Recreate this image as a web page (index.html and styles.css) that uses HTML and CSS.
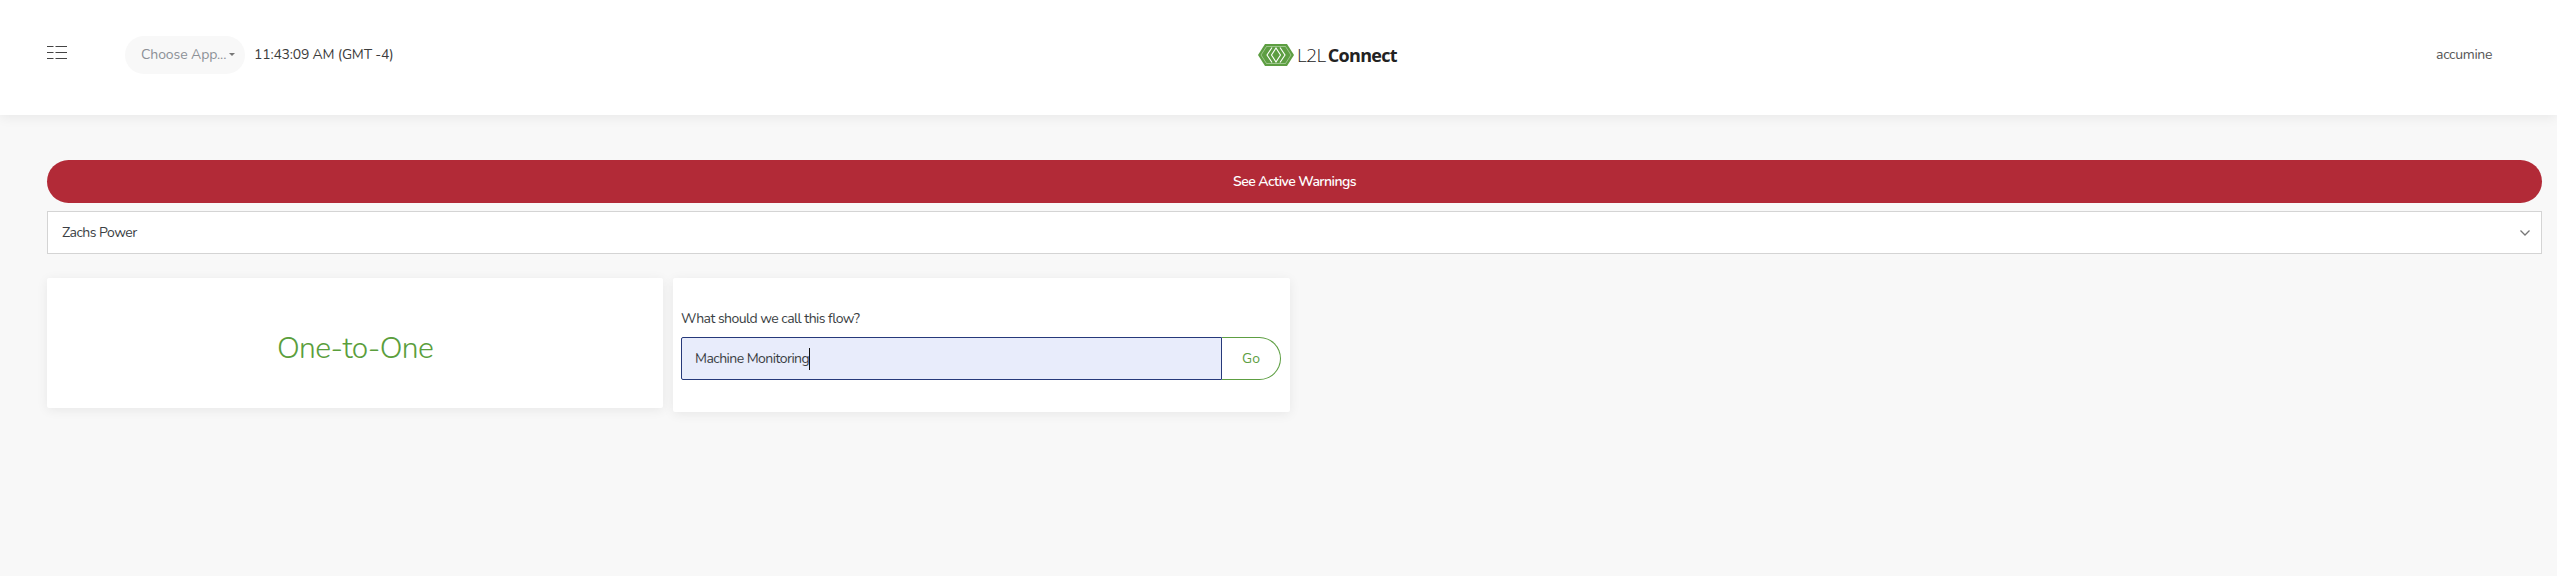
FILE: index.html
```html
<!DOCTYPE html>
<html lang="en">
<head>
<meta charset="utf-8">
<title>L2L Connect</title>
<link rel="stylesheet" href="styles.css">
</head>
<body>
<header class="topbar">
  <div class="topbar-left">
    <svg class="menu-icon" width="20" height="13" viewBox="0 0 20 13" fill="none" stroke="#444" stroke-width="1"><path d="M0 .5h6.500M8.500 .5h11.500M0 6.500h6.500M8.500 6.500h11.500M0 12.500h6.500M8.500 12.500h11.500"/></svg>
    <div class="app-chooser"><span>Choose App...</span><i class="caret"></i></div>
    <div class="clock">11:43:09 AM (GMT -4)</div>
  </div>
  <div class="logo">
    <svg width="36" height="22" viewBox="0 0 36 22"><path d="M7 0h22l7 11-7 11H7L0 11z" fill="#5d9e42"/><path d="M3 11l5.500-8.500h19L33 11l-5.500 8.500h-19z" fill="none" stroke="#fff" stroke-opacity=".5" stroke-width=".8"/><path d="M18 4l4.500 7-4.500 7-4.500-7z" fill="none" stroke="#fff" stroke-width="1.100"/><path d="M14 3.500l-5 7.500 5 7.500M22 3.500l5 7.500-5 7.500" fill="none" stroke="#fff" stroke-width="1.100"/></svg>
    <span class="logo-l2l">L2L</span><span class="logo-connect">Connect</span>
  </div>
  <div class="user">accumine</div>
</header>
<main class="content">
  <button class="warning-btn">See Active Warnings</button>
  <div class="select-box">
    <span>Zachs Power</span>
    <svg width="12" height="8" viewBox="0 0 12 8" fill="none" stroke="#777" stroke-width="1.300"><path d="M1.500 1.500L6 6l4.500-4.500"/></svg>
  </div>
  <div class="cards">
    <section class="card card-title"><h2>One-to-One</h2></section>
    <section class="card card-form">
      <label class="form-label">What should we call this flow?</label>
      <div class="input-group">
        <div class="text-input"><span>Machine Monitoring</span><i class="text-caret"></i></div>
        <button class="go-btn">Go</button>
      </div>
    </section>
  </div>
</main>
</body>
</html>
```
FILE: styles.css
```css
* { box-sizing: border-box; }
html, body { margin: 0; height: 100%; }
body {
  background: #f8f8f8;
  font-family: "Nunito", "Lato", "Noto Sans", sans-serif;
  font-size: 14px;
  letter-spacing: -.55px;
  color: #3b3f44;
  overflow: hidden;
}
.topbar {
  height: 115px;
  background: #fff;
  box-shadow: 0 2px 12px rgba(0,0,0,.07);
  display: grid;
  grid-template-columns: 1211px auto 1fr;
  align-items: center;
  padding: 0 65px 6px 47px;
}
.topbar-left { display: flex; align-items: center; }
.menu-icon { margin: -4px 58px 0 0; }
.app-chooser {
  width: 120px;
  height: 38px;
  border-radius: 19px;
  background: #f8f8f8;
  color: #8c9096;
  display: flex;
  align-items: center;
  padding-left: 16px;
  white-space: nowrap;
  letter-spacing: -.1px;
}
.caret {
  margin-left: 3px;
  border: 3.500px solid transparent;
  border-top-color: #777;
  border-bottom: 0;
}
.clock { margin-left: 9px; letter-spacing: -.2px; color: #3c3c3c; }
.logo { display: flex; align-items: center; font-family: "Open Sans", sans-serif; color: #333; letter-spacing: normal; }
.logo-l2l { margin-left: 3px; font-size: 19px; font-weight: 300; letter-spacing: -.5px; color: #222; }
.logo-connect { margin-left: 2px; font-weight: 700; letter-spacing: -.7px; font-size: 18px; color: #222; }
.user { justify-self: end; color: #555; letter-spacing: -.35px; }
.content { padding: 45px 15px 0 47px; }
.warning-btn {
  display: block;
  width: 100%;
  height: 43px;
  border: 0;
  border-radius: 22px;
  background: #b22a37;
  color: #fff;
  font: 600 14px "Nunito", "Lato", "Noto Sans", sans-serif;
  letter-spacing: -.55px;
}
.select-box {
  margin-top: 8px;
  height: 43px;
  background: #fff;
  border: 1px solid #d4d4d4;
  display: flex;
  align-items: center;
  justify-content: space-between;
  padding: 0 10px 0 14px;
}
.cards { display: flex; align-items: flex-start; gap: 10px; margin-top: 24px; }
.card { background: #fff; border-radius: 2px; box-shadow: 0 2px 12px rgba(0,0,0,.07); width: 616px; }
.card-title { height: 130px; display: flex; align-items: center; justify-content: center; padding-top: 10px; }
.card-title h2 { margin: 0; font-weight: 300; font-size: 30px; letter-spacing: -.7px; color: #5a9e3c; }
.card-form { height: 134px; width: 617px; padding: 31px 9px 0 8px; }
.form-label { display: block; line-height: 20px; margin-bottom: 8px; }
.input-group { display: flex; height: 43px; }
.text-input {
  flex: 1;
  background: #e8ecfb;
  border: 1px solid #26397a;
  border-radius: 2px 0 0 2px;
  display: flex;
  align-items: center;
  padding-left: 13px;
}
.text-caret { width: 1px; height: 22px; background: #111; }
.go-btn {
  width: 59px;
  padding-right: 6px;
  background: #fff;
  border: 1px solid #5d9e42;
  border-left: 0;
  border-radius: 0 22px 22px 0;
  color: #5d9e42;
  font: 14px "Nunito", "Lato", "Noto Sans", sans-serif;
}
```
